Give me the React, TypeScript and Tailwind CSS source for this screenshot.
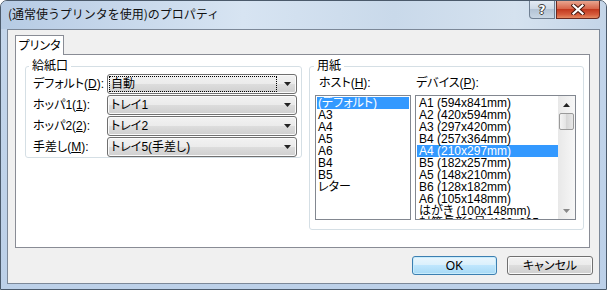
import React from "react";

function Arrow({ up }: { up?: boolean }) {
  return (
    <svg width="7" height="4" viewBox="0 0 7 4">
      {up ? <polygon points="0,4 7,4 3.5,0" fill="#222" /> : <polygon points="0,0 7,0 3.5,4" fill="#222" />}
    </svg>
  );
}

function Combo({ value, focus }: { value: string; focus?: boolean }) {
  return (
    <div className="w-[190px] h-[20px] rounded-[3px] border border-[#707070] bg-[linear-gradient(#f2f2f2_0%,#ebebeb_50%,#dddddd_50%,#cfcfcf_100%)] shadow-[inset_0_0_0_1px_#fafafa] flex items-center">
      <div
        className={
          focus
            ? "ml-[1px] w-[168px] h-[16px] border border-dotted border-black flex items-center pl-[1px] leading-[12px]"
            : "ml-[1px] w-[168px] h-[16px] border border-transparent flex items-center pl-[1px] leading-[12px]"
        }
      >
        {value}
      </div>
      <div className="flex-1 flex items-center justify-center pl-[1px]">
        <Arrow />
      </div>
    </div>
  );
}

function Row({ label, combo, focus }: { label: React.ReactNode; combo: string; focus?: boolean }) {
  return (
    <div className="flex items-center h-[20px]">
      <div className="w-[74px] leading-[12px] whitespace-nowrap">{label}</div>
      <Combo value={combo} focus={focus} />
    </div>
  );
}

const hosts = ["(デフォルト)", "A3", "A4", "A5", "A6", "B4", "B5", "レター"];
const devices = [
  "A1 (594x841mm)",
  "A2 (420x594mm)",
  "A3 (297x420mm)",
  "B4 (257x364mm)",
  "A4 (210x297mm)",
  "B5 (182x257mm)",
  "A5 (148x210mm)",
  "B6 (128x182mm)",
  "A6 (105x148mm)",
  "はがき (100x148mm)",
  "封筒長形3号 (120x235mm)",
];

export default function App() {
  return (
    <div className="w-[607px] h-[290px] flex flex-col border border-[#4b5a6b] rounded-t-[7px] bg-[linear-gradient(to_bottom,#c4d6eb,#bcd0e8)] font-['Liberation_Sans','Noto_Sans_CJK_JP',sans-serif] text-[12px] text-black overflow-hidden">
      {/* title bar */}
      <div className="h-[28px] shrink-0 flex items-start bg-[linear-gradient(to_right,#b6cbe4,#d7e4f2_40%,#c9d9ea_65%,#d5e2ef_85%,#c4d5e8)]">
        <div className="pl-[7px] pt-[6px] leading-[14px] text-[12px] font-['Noto_Sans_CJK_JP',sans-serif] text-[#111]">
          (通常使うプリンタを使用)のプロパティ
        </div>
        <div className="ml-auto mr-[6px] flex gap-[1px]">
          <div className="w-[26px] h-[18px] border border-t-0 border-[#6f7f92] rounded-bl-[4px] bg-[linear-gradient(#e3ebf4_0%,#cdd9e6_45%,#b3c3d5_50%,#c8d6e4_100%)] flex items-center justify-center">
            <span className="font-['DejaVu_Sans',sans-serif] font-bold text-[12px] leading-[12px] text-white [text-shadow:0_0_1px_#333,1px_0_0_#444,-1px_0_0_#444,0_1px_0_#444,0_-1px_0_#444]">
              ?
            </span>
          </div>
          <div className="w-[44px] h-[18px] border border-t-0 border-[#6b2a20] rounded-br-[4px] bg-[linear-gradient(#e9a58f_0%,#d8664b_45%,#c2391f_50%,#d65c3c_80%,#e48a62_100%)] flex items-center justify-center">
            <svg width="14" height="11" viewBox="0 0 14 11">
              <path d="M2.5 1.5 L11.5 9.5 M11.5 1.5 L2.5 9.5" stroke="#4a1a10" strokeWidth="4.2" strokeLinecap="square" />
              <path d="M2.5 1.5 L11.5 9.5 M11.5 1.5 L2.5 9.5" stroke="#ffffff" strokeWidth="2.2" strokeLinecap="square" />
            </svg>
          </div>
        </div>
      </div>

      {/* body */}
      <div className="mx-[6px] h-[255px] shrink-0 border border-[#7c8898] bg-[#f0f0f0] flex flex-col pl-[7px] pr-[6px] pt-[5px] [font-feature-settings:'palt']">
        {/* tab strip */}
        <div className="flex">
          <div className="relative z-10 -mb-px h-[20px] w-[49px] border border-b-0 border-[#898c95] bg-white flex items-center justify-center leading-[12px]">
            プリンタ
          </div>
        </div>
        {/* tab page */}
        <div className="w-[575px] h-[194px] border border-[#898c95] bg-white flex items-start pl-[9px] pt-[5px] gap-[7px]">
          <fieldset className="w-[277px] border border-[#d5dfe5] rounded-[3px] pl-[7px] pr-[4px] pt-[2px] pb-0 flex flex-col gap-[1px]">
            <legend className="-ml-[4px] px-[3px] leading-[12px]">給紙口</legend>
            <Row label={<>デフォルト(<u>D</u>):</>} combo="自動" focus />
            <Row label={<>ホッパ1(<u>1</u>):</>} combo="トレイ1" />
            <Row label={<>ホッパ2(<u>2</u>):</>} combo="トレイ2" />
            <Row label={<>手差し(<u>M</u>):</>} combo="トレイ5(手差し)" />
          </fieldset>

          <fieldset className="w-[275px] border border-[#d5dfe5] rounded-[3px] pl-[5px] pr-[7px] pt-[5px] pb-[9px]">
            <legend className="-ml-[1px] px-[3px] leading-[12px]">用紙</legend>
            <div className="flex gap-[4px]">
              <div className="flex flex-col w-[96px]">
                <div className="leading-[12px] h-[12px] pl-[4px] whitespace-nowrap">
                  ホスト(<u>H</u>):
                </div>
                <div className="mt-[6px] h-[125px] border border-[#828790] bg-white pt-[1px] px-[1px] overflow-hidden">
                  {hosts.map((t, i) => (
                    <div
                      key={t}
                      className={
                        i === 0
                          ? "h-[12px] leading-[12px] pl-[1px] whitespace-nowrap bg-[#3399ff] text-white"
                          : "h-[12px] leading-[12px] pl-[1px] whitespace-nowrap"
                      }
                    >
                      {t}
                    </div>
                  ))}
                </div>
              </div>
              <div className="flex flex-col w-[161px]">
                <div className="leading-[12px] h-[12px] pl-[1px] whitespace-nowrap">
                  デバイス(<u>P</u>):
                </div>
                <div className="mt-[6px] h-[125px] border border-[#828790] bg-white flex overflow-hidden">
                  <div className="flex-1 pt-[1px] pl-[1px] overflow-hidden">
                    {devices.map((t, i) => (
                      <div
                        key={t}
                        className={
                          i === 4
                            ? "h-[12px] leading-[12px] pl-[2px] whitespace-nowrap bg-[#3399ff] text-white"
                            : "h-[12px] leading-[12px] pl-[2px] whitespace-nowrap"
                        }
                      >
                        {t}
                      </div>
                    ))}
                  </div>
                  <div className="w-[17px] h-full bg-[linear-gradient(to_right,#e8e8e8,#f7f7f7)] flex flex-col items-center">
                    <div className="h-[17px] flex items-center justify-center">
                      <Arrow up />
                    </div>
                    <div className="w-[15px] h-[17px] rounded-[2px] border border-[#9a9a9a] bg-[linear-gradient(to_right,#f4f4f4,#e2e2e2_50%,#d6d6d6_50%,#e8e8e8)]" />
                    <div className="flex-1" />
                    <div className="h-[17px] flex items-center justify-center">
                      <svg width="7" height="4" viewBox="0 0 7 4">
                        <polygon points="0,0 7,0 3.5,4" fill="#888" />
                      </svg>
                    </div>
                  </div>
                </div>
              </div>
            </div>
          </fieldset>
        </div>

        {/* buttons */}
        <div className="mt-[8px] flex justify-end gap-[10px]">
          <div className="w-[85px] h-[19px] rounded-[3px] border border-[#3c7fb1] bg-[linear-gradient(#eaf6fd_0%,#d9f0fc_50%,#bee6fd_50%,#a7d9f5_100%)] shadow-[inset_0_0_0_1px_#c8ecfc] flex items-center justify-center leading-[12px]">
            OK
          </div>
          <div className="w-[86px] h-[19px] rounded-[3px] border border-[#707070] bg-[linear-gradient(#f2f2f2_0%,#ebebeb_50%,#dddddd_50%,#cfcfcf_100%)] shadow-[inset_0_0_0_1px_#fafafa] flex items-center justify-center leading-[12px]">
            キャンセル
          </div>
        </div>
      </div>
    </div>
  );
}
